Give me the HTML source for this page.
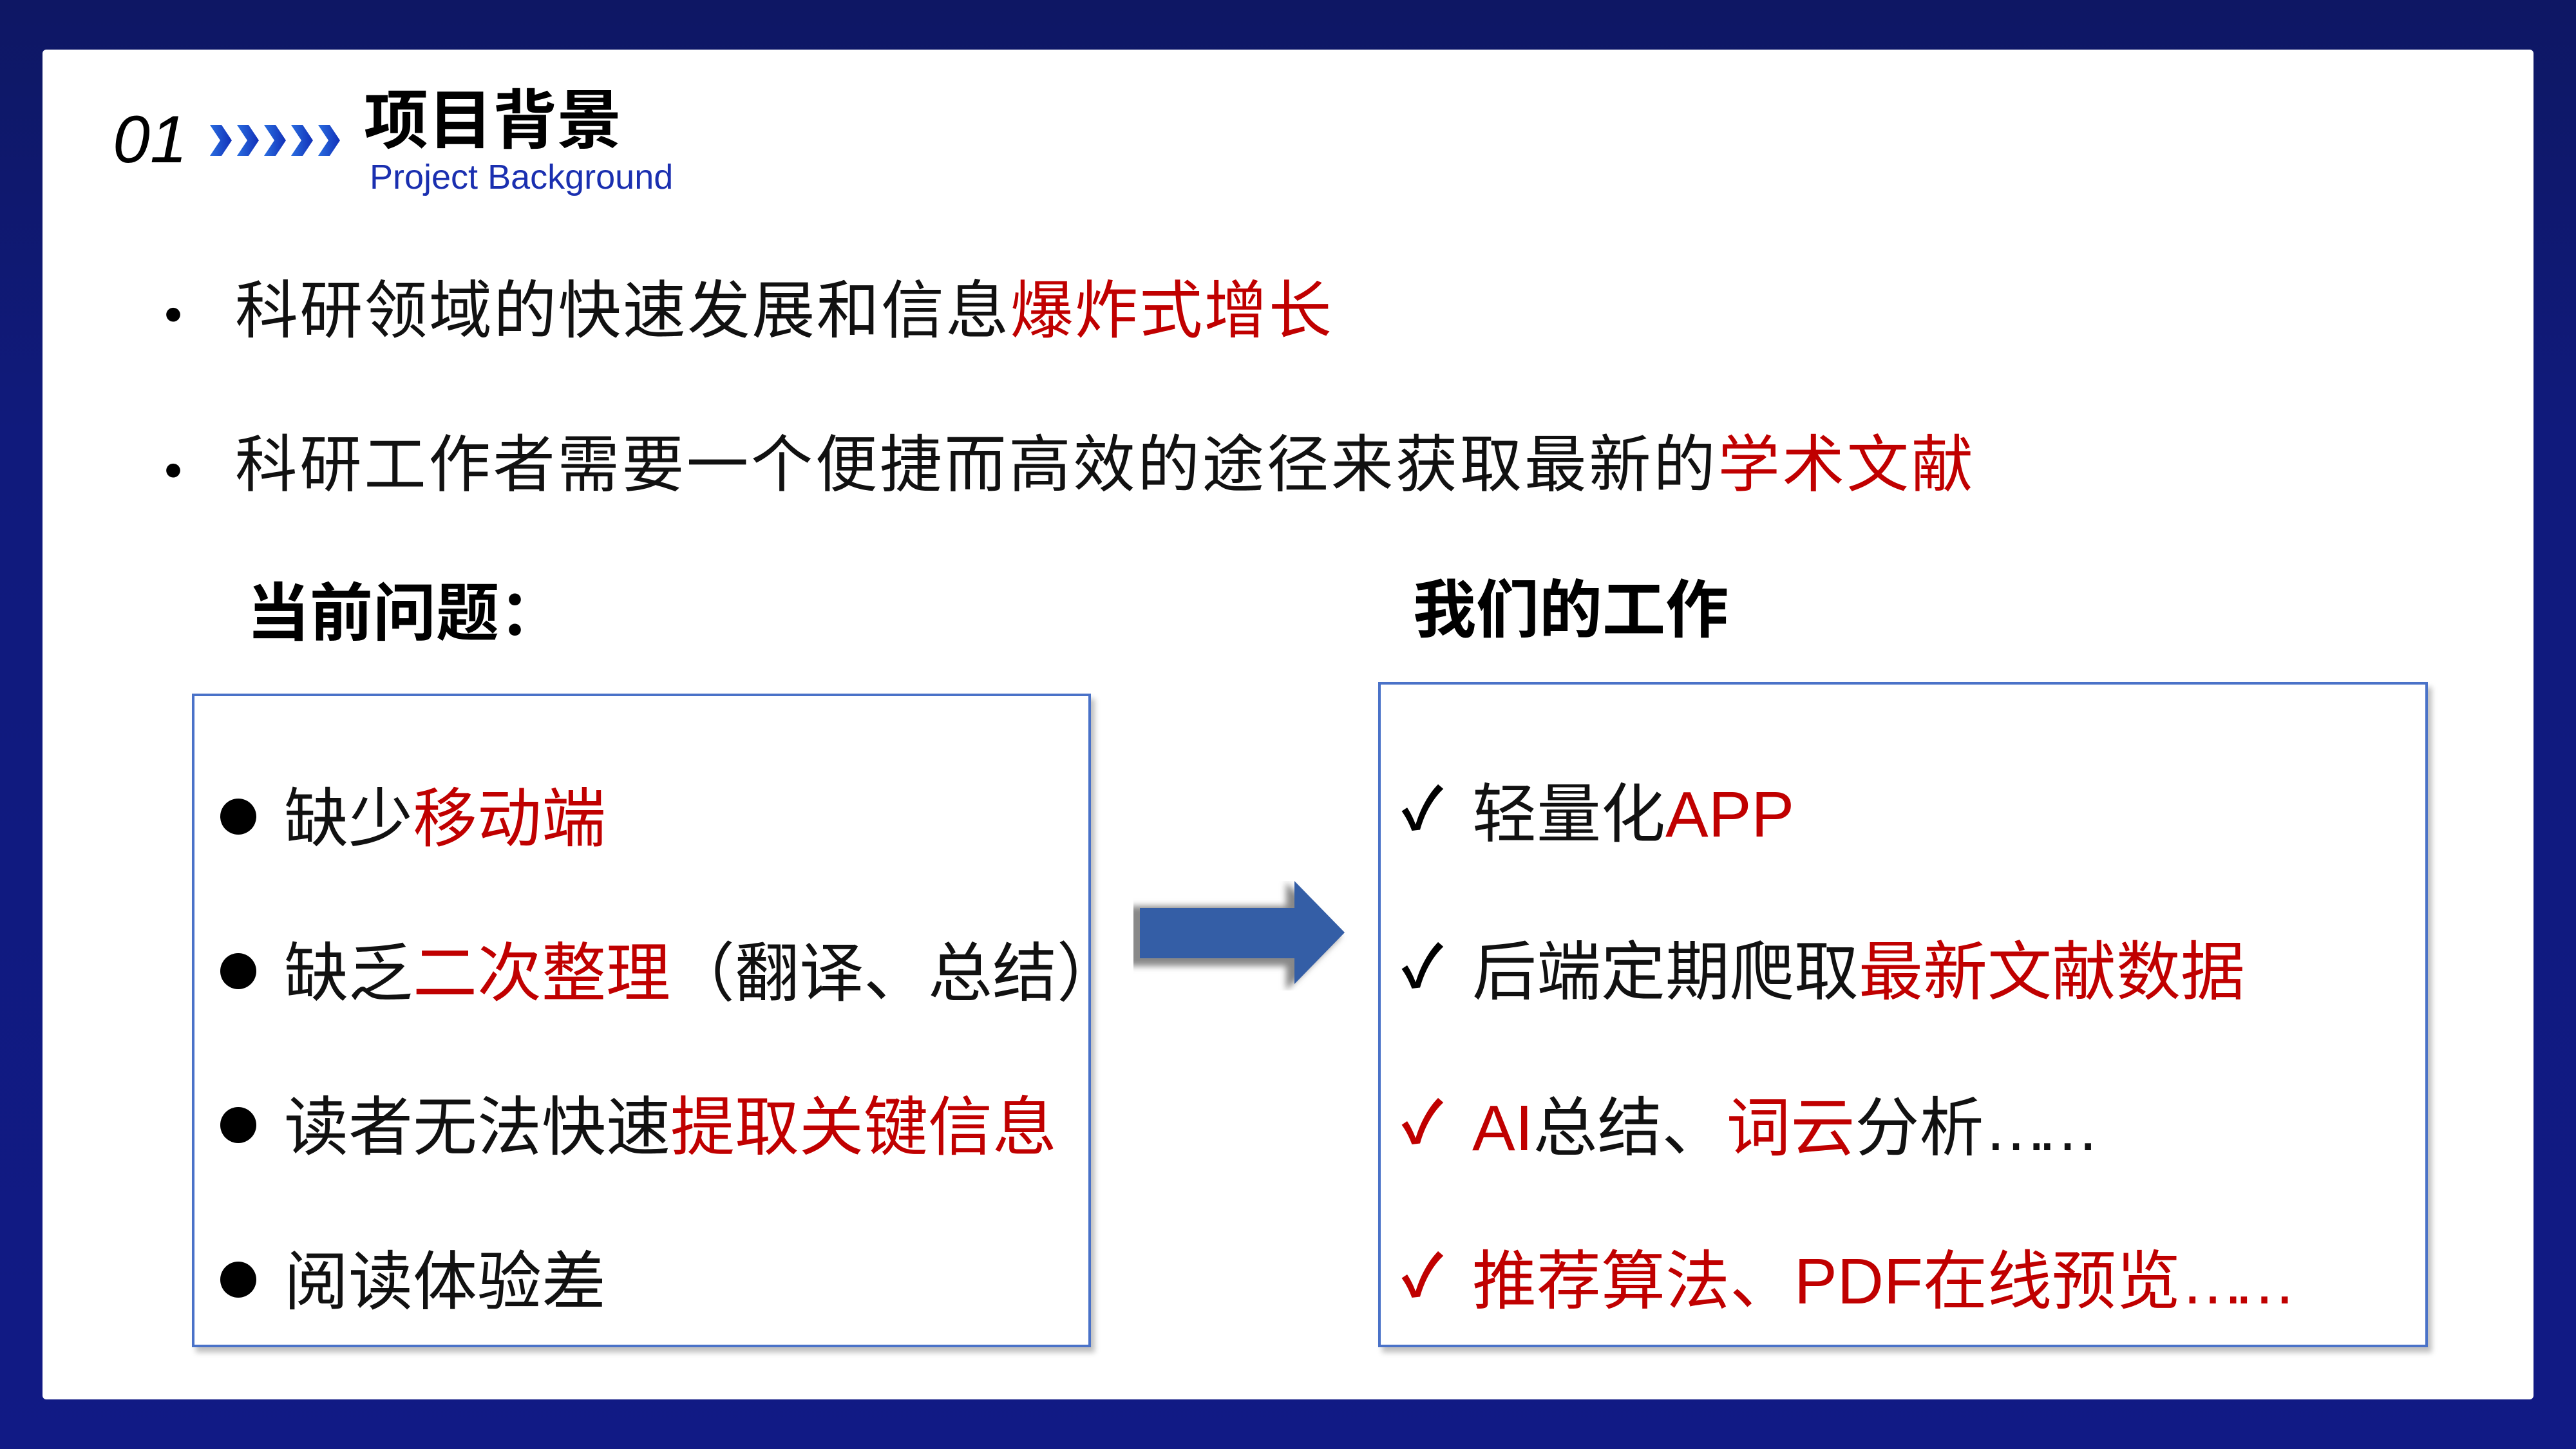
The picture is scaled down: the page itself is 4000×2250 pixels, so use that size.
<!DOCTYPE html>
<html><head><meta charset="utf-8"><style>
*{margin:0;padding:0;box-sizing:border-box}
body{width:4000px;height:2250px;overflow:hidden;position:relative;background:linear-gradient(180deg,#0e1764 0%,#101a7c 30%,#111a85 100%);font-family:"Liberation Sans","Noto Sans CJK SC",sans-serif}
.card{position:absolute;left:66px;top:77px;width:3868px;height:2096px;background:#fff;border-radius:6px}
.a{position:absolute;white-space:nowrap;line-height:1}
.r{color:#c00000}
.box{position:absolute;background:#fff;border:4px solid #4a72c8;box-shadow:6px 8px 8px rgba(0,0,0,0.25)}
.dot{position:absolute;width:56px;height:56px;border-radius:50%;background:#000}
.el{letter-spacing:-20px}
</style></head><body>
<div class="card"></div>
<div class="a" style="left:175px;top:165px;font-size:104px;font-style:italic;color:#000;font-family:'Liberation Sans',sans-serif">01</div>
<svg class="a" style="left:326px;top:194px" width="210" height="48" viewBox="0 0 210 48">
<defs><linearGradient id="g" x1="0" x2="1"><stop offset="0" stop-color="#2a6ee0"/><stop offset="1" stop-color="#1230b8"/></linearGradient></defs>
<g fill="url(#g)"><polygon points="0,0 18,0 34,24 18,48 0,48 16,24"/><polygon points="42,0 60,0 76,24 60,48 42,48 58,24"/><polygon points="84,0 102,0 118,24 102,48 84,48 100,24"/><polygon points="126,0 144,0 160,24 144,48 126,48 142,24"/><polygon points="168,0 186,0 202,24 186,48 168,48 184,24"/></g></svg>
<div class="a" style="left:565px;top:138px;font-size:100px;font-weight:bold;color:#000">项目背景</div>
<div class="a" style="left:574px;top:248px;font-size:54px;color:#1a2fb0">Project Background</div>

<div class="a" style="left:255px;top:448px;font-size:80px">•</div>
<div class="a" style="left:365px;top:433px;font-size:98px;color:#111;letter-spacing:2.3px">科研领域的快速发展和信息<span class="r">爆炸式增长</span></div>
<div class="a" style="left:255px;top:690px;font-size:80px">•</div>
<div class="a" style="left:365px;top:675px;font-size:96.5px;color:#111;letter-spacing:3.6px">科研工作者需要一个便捷而高效的途径来获取最新的<span class="r">学术文献</span></div>

<div class="a" style="left:383px;top:903px;font-size:98px;font-weight:bold;color:#000">当前问题：</div>
<div class="a" style="left:2194px;top:898px;font-size:98px;font-weight:bold;color:#000">我们的工作</div>

<div class="box" style="left:298px;top:1077px;width:1396px;height:1015px"></div>
<div class="box" style="left:2140px;top:1059px;width:1630px;height:1033px"></div>

<div class="dot" style="left:342px;top:1240px"></div>
<div class="dot" style="left:342px;top:1480px"></div>
<div class="dot" style="left:342px;top:1719px"></div>
<div class="dot" style="left:342px;top:1959px"></div>
<div class="a" style="left:441px;top:1222px;font-size:100px;color:#111">缺少<span class="r">移动端</span></div>
<div class="a" style="left:441px;top:1462px;font-size:100px;color:#111">缺乏<span class="r">二次整理</span>（翻译、总结）</div>
<div class="a" style="left:441px;top:1701px;font-size:100px;color:#111">读者无法快速<span class="r">提取关键信息</span></div>
<div class="a" style="left:441px;top:1941px;font-size:100px;color:#111">阅读体验差</div>

<svg class="a" style="left:1760px;top:1368px" width="340" height="170" viewBox="0 0 340 170">
<defs><filter id="s"><feGaussianBlur stdDeviation="5"/></filter></defs>
<polygon points="0,45 245,45 245,8 330,92 245,176 245,138 0,138" fill="#888" filter="url(#s)" transform="translate(-8,-6)"/>
<polygon points="10,42 250,42 250,0 328,80 250,160 250,120 10,120" fill="#345ea6"/>
</svg>

<div class="a" style="left:2176px;top:1213px;font-size:90px;color:#000;font-weight:bold">✓</div>
<div class="a" style="left:2176px;top:1458px;font-size:90px;color:#000;font-weight:bold">✓</div>
<div class="a r" style="left:2176px;top:1700px;font-size:90px;font-weight:bold">✓</div>
<div class="a r" style="left:2176px;top:1938px;font-size:90px;font-weight:bold">✓</div>
<div class="a" style="left:2286px;top:1215px;font-size:100px;color:#111">轻量化<span class="r">APP</span></div>
<div class="a" style="left:2286px;top:1460px;font-size:100px;color:#111">后端定期爬取<span class="r">最新文献数据</span></div>
<div class="a" style="left:2286px;top:1702px;font-size:100px;color:#111"><span class="r">AI</span>总结、<span class="r">词云</span>分析<span class="el">……</span></div>
<div class="a r" style="left:2286px;top:1940px;font-size:100px">推荐算法、PDF在线预览<span class="el">……</span></div>
</body></html>
